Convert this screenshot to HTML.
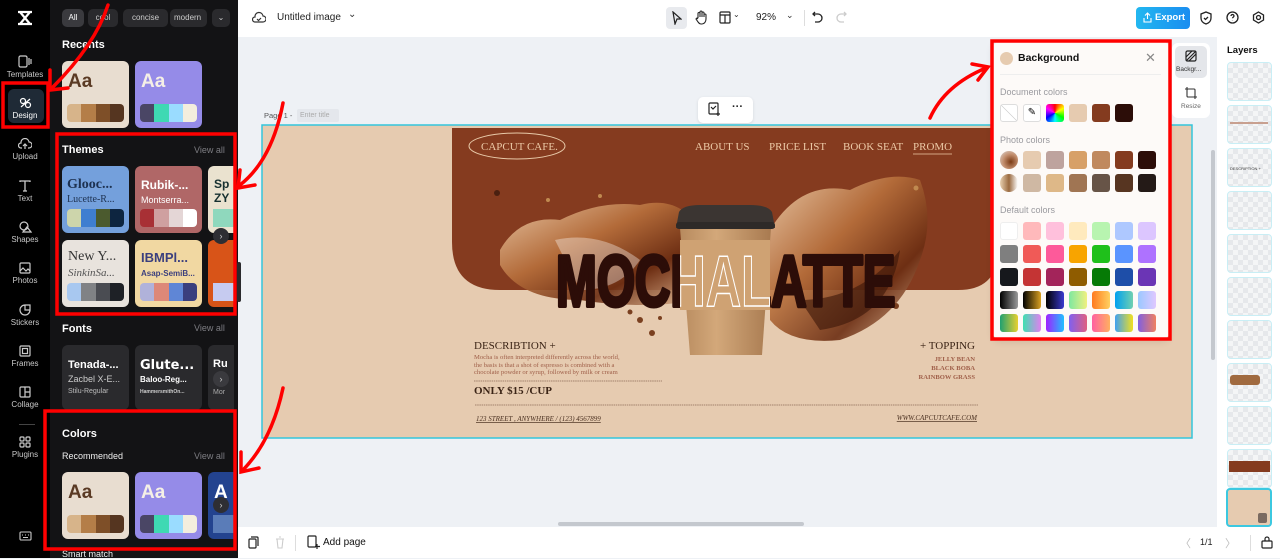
<!DOCTYPE html>
<html><head><meta charset="utf-8">
<style>
*{box-sizing:border-box;margin:0;padding:0}
body{width:1280px;height:558px;overflow:hidden;position:relative;font-family:"Liberation Sans",sans-serif;background:#eef1f5}
.a{position:absolute}
.rail{left:0;top:0;width:50px;height:558px;background:#000}
.ri{position:absolute;left:0;width:50px;text-align:center;color:#c9c9c9;font-size:8px}
.ri svg{display:block;margin:0 auto 2px}
.panel{left:50px;top:0;width:188px;height:558px;background:#131315;color:#fff}
.chip{position:absolute;top:9px;height:18px;border-radius:5px;background:#2a2a2d;color:#ccc;font-size:8px;line-height:18px;text-align:center}
.h{position:absolute;font-size:11px;font-weight:bold;color:#fff}
.va{position:absolute;font-size:9px;color:#7d7d82}
.card{position:absolute;width:67px;height:67px;border-radius:6px;overflow:hidden}
.pal{position:absolute;left:5px;right:5px;bottom:6px;height:18px;border-radius:4px;overflow:hidden;display:flex}
.pal i{flex:1}
.aa{position:absolute;left:6px;top:10px;font-size:19px;font-weight:bold}
.top{left:238px;top:0;width:1042px;height:37px;background:#fff}
.bot{left:238px;top:527px;width:1042px;height:31px;background:#fff}
.sw{position:absolute;width:18px;height:18px;border-radius:3px}
.lay{position:absolute;left:1227px;width:45px;height:39px;border-radius:4px;border:1.5px solid #c9eef5;background:
 repeating-conic-gradient(#e6e8eb 0 25%,#f4f5f6 0 50%) 0 0/10px 10px}
</style></head><body>

<div class="a rail">
 <div class="ri" style="top:9px;color:#fff"><svg width="18" height="18" viewBox="0 0 18 18" fill="none" stroke="#fff" stroke-width="2.2"><path d="M2 3h14M2 15h14M4 3l10 12M14 3L4 15"/></svg></div>
 <div class="ri" style="top:55px"><svg width="14" height="13" viewBox="0 0 14 13" fill="none" stroke="#ccc" stroke-width="1.2"><rect x="1" y="1" width="8" height="11" rx="1.5"/><path d="M11 3v7M13 4v5"/></svg>Templates</div>
 <div class="a" style="left:8px;top:89px;width:36px;height:34px;border-radius:6px;background:#1f2a36"></div>
 <div class="ri" style="top:97px;color:#fff"><svg width="13" height="12" viewBox="0 0 13 12" fill="none" stroke="#fff" stroke-width="1.2"><circle cx="4" cy="4" r="2.5"/><circle cx="9" cy="8" r="2.5"/><path d="M2 10l9-8"/></svg>Design</div>
 <div class="ri" style="top:138px"><svg width="14" height="12" viewBox="0 0 14 12" fill="none" stroke="#ccc" stroke-width="1.2"><path d="M4 10H3a2.5 2.5 0 010-5 4 4 0 018-1 3 3 0 01-0 6h-1M7 11V6M5 8l2-2 2 2"/></svg>Upload</div>
 <div class="ri" style="top:180px"><svg width="12" height="12" viewBox="0 0 12 12" fill="none" stroke="#ccc" stroke-width="1.3"><path d="M1 2V1h10v1M6 1v10M4 11h4"/></svg>Text</div>
 <div class="ri" style="top:221px"><svg width="13" height="12" viewBox="0 0 13 12" fill="none" stroke="#ccc" stroke-width="1.2"><circle cx="5" cy="5" r="4"/><path d="M8 6l4 5H4z"/></svg>Shapes</div>
 <div class="ri" style="top:262px"><svg width="12" height="12" viewBox="0 0 12 12" fill="none" stroke="#ccc" stroke-width="1.2"><rect x="1" y="1" width="10" height="10" rx="1"/><path d="M1 9l3-3 3 3 2-2 2 2"/></svg>Photos</div>
 <div class="ri" style="top:304px"><svg width="12" height="12" viewBox="0 0 12 12" fill="none" stroke="#ccc" stroke-width="1.2"><path d="M11 6a5 5 0 11-5-5h5v5zM11 6H6V1"/></svg>Stickers</div>
 <div class="ri" style="top:345px"><svg width="12" height="12" viewBox="0 0 12 12" fill="none" stroke="#ccc" stroke-width="1.2"><rect x="1" y="1" width="10" height="10" rx="1"/><rect x="3.5" y="3.5" width="5" height="5"/></svg>Frames</div>
 <div class="ri" style="top:386px"><svg width="12" height="12" viewBox="0 0 12 12" fill="none" stroke="#ccc" stroke-width="1.2"><rect x="1" y="1" width="10" height="10" rx="1"/><path d="M6 1v10M6 6h5"/></svg>Collage</div>
 <div class="a" style="left:19px;top:424px;width:16px;height:1px;background:#444"></div>
 <div class="ri" style="top:436px"><svg width="12" height="12" viewBox="0 0 12 12" fill="none" stroke="#ccc" stroke-width="1.2"><rect x="1" y="1" width="4" height="4" rx="1"/><rect x="7" y="1" width="4" height="4" rx="1"/><rect x="1" y="7" width="4" height="4" rx="1"/><rect x="7" y="7" width="4" height="4" rx="1"/></svg>Plugins</div>
 <div class="ri" style="top:531px"><svg width="13" height="10" viewBox="0 0 13 10" fill="none" stroke="#ccc" stroke-width="1.1"><rect x="1" y="1" width="11" height="8" rx="1"/><path d="M3 4h1M6 4h1M9 4h1M4 6.5h5"/></svg></div>
</div>

<div class="a panel">
 <div class="chip" style="left:12px;width:22px;background:#3a3a3e;color:#fff">All</div>
 <div class="chip" style="left:38px;width:30px">cool</div>
 <div class="chip" style="left:73px;width:45px">concise</div>
 <div class="chip" style="left:120px;width:37px;text-align:left;padding-left:4px;overflow:hidden">modern</div>
 <div class="chip" style="left:162px;width:18px">⌄</div>
 <div class="h" style="left:12px;top:39px">Recents</div>
 <div class="card" style="left:12px;top:61px;background:#e8ddd0"><div class="aa" style="color:#5a3a24">Aa</div><div class="pal"><i style="background:#d7b48a"></i><i style="background:#b47e48"></i><i style="background:#7e4f28"></i><i style="background:#553520"></i></div></div>
 <div class="card" style="left:85px;top:61px;background:#958be8"><div class="aa" style="color:#f5f0e6">Aa</div><div class="pal"><i style="background:#4a4665"></i><i style="background:#3fd9b3"></i><i style="background:#9adcff"></i><i style="background:#f3eedd"></i></div></div>
 <div class="h" style="left:12px;top:144px">Themes</div><div class="va" style="left:144px;top:145px">View all</div>
 <div class="card" style="left:12px;top:166px;background:#74a0dc"><div style="position:absolute;left:5px;top:11px;font:bold 14px 'Liberation Serif',serif;color:#1d3150">Glooc...</div><div style="position:absolute;left:5px;top:28px;font:10px 'Liberation Serif',serif;color:#1d3150">Lucette-R...</div><div class="pal"><i style="background:#cdd5ab"></i><i style="background:#3f7ed0"></i><i style="background:#4b5a2e"></i><i style="background:#0d2540"></i></div></div>
 <div class="card" style="left:85px;top:166px;background:#b06767"><div style="position:absolute;left:6px;top:12px;font:bold 12px 'Liberation Sans';color:#fff">Rubik-...</div><div style="position:absolute;left:6px;top:29px;font:9px 'Liberation Sans';color:#fff">Montserra...</div><div class="pal"><i style="background:#a83035"></i><i style="background:#cfa0a0"></i><i style="background:#e4d6d6"></i><i style="background:#fff"></i></div></div>
 <div class="card" style="left:158px;top:166px;width:26px;border-radius:6px 0 0 6px;background:#eae2cf"><div style="position:absolute;left:6px;top:11px;font:bold 12px sans-serif;color:#163030">Sp<br>ZY</div><div style="position:absolute;left:5px;bottom:6px;width:21px;height:18px;background:#8fd8bd"></div></div>
 <div class="card" style="left:12px;top:240px;background:#e8e3dd"><div style="position:absolute;left:6px;top:9px;font:14px 'Liberation Serif',serif;color:#333">New Y...</div><div style="position:absolute;left:6px;top:27px;font:italic 11px 'Liberation Serif',serif;color:#555">SinkinSa...</div><div class="pal"><i style="background:#a8c8f0"></i><i style="background:#808285"></i><i style="background:#4a4c52"></i><i style="background:#1e2126"></i></div></div>
 <div class="card" style="left:85px;top:240px;background:#f1d8a2"><div style="position:absolute;left:6px;top:10px;font:bold 13px 'Liberation Sans';color:#3b3f7e">IBMPl...</div><div style="position:absolute;left:6px;top:29px;font:bold 8px 'Liberation Sans';color:#3b3f7e">Asap-SemiB...</div><div class="pal"><i style="background:#b0b2da"></i><i style="background:#dd8878"></i><i style="background:#5f86d6"></i><i style="background:#3a3f7e"></i></div></div>
 <div class="card" style="left:158px;top:240px;width:26px;border-radius:6px 0 0 6px;background:#d85418"><div style="position:absolute;left:5px;bottom:6px;width:21px;height:18px;background:#c6cbf0"></div></div>
 <div class="a" style="left:163px;top:228px;width:16px;height:16px;border-radius:50%;background:#2e2e33;color:#ccc;font-size:9px;text-align:center;line-height:16px">›</div>
 <div class="h" style="left:12px;top:323px">Fonts</div><div class="va" style="left:144px;top:323px">View all</div>
 <div class="card" style="left:12px;top:345px;background:#2a2a2d;height:65px"><div style="position:absolute;left:6px;top:14px;font:bold 11px 'Liberation Sans';color:#fff">Tenada-...</div><div style="position:absolute;left:6px;top:29px;font:9px 'Liberation Sans';color:#ccc">Zacbel X-E...</div><div style="position:absolute;left:6px;top:43px;font:7px 'Liberation Sans';color:#bbb">Stilu-Regular</div></div>
 <div class="card" style="left:85px;top:345px;background:#2a2a2d;height:65px"><div style="position:absolute;left:5px;top:13px;font:bold 13px 'DejaVu Sans';color:#fff">Glute...</div><div style="position:absolute;left:5px;top:30px;font:bold 8px 'Liberation Sans';color:#fff">Baloo-Reg...</div><div style="position:absolute;left:5px;top:44px;font:bold 5px 'Liberation Sans';color:#ccc">HammersmithOn...</div></div>
 <div class="card" style="left:158px;top:345px;width:26px;height:65px;border-radius:6px 0 0 6px;background:#2a2a2d"><div style="position:absolute;left:5px;top:13px;font:bold 11px sans-serif;color:#fff">Ru</div><div style="position:absolute;left:5px;top:44px;font:7px sans-serif;color:#aaa">Mor</div></div>
 <div class="a" style="left:163px;top:371px;width:16px;height:16px;border-radius:50%;background:#3a3a3e;color:#ccc;font-size:9px;text-align:center;line-height:16px">›</div>
 <div class="h" style="left:12px;top:428px">Colors</div>
 <div class="a" style="left:12px;top:451px;font-size:9px;color:#eee">Recommended</div><div class="va" style="left:144px;top:451px">View all</div>
 <div class="card" style="left:12px;top:472px;background:#e8ddd0"><div class="aa" style="color:#5a3a24">Aa</div><div class="pal"><i style="background:#d7b48a"></i><i style="background:#b47e48"></i><i style="background:#7e4f28"></i><i style="background:#553520"></i></div></div>
 <div class="card" style="left:85px;top:472px;background:#958be8"><div class="aa" style="color:#f5f0e6">Aa</div><div class="pal"><i style="background:#4a4665"></i><i style="background:#3fd9b3"></i><i style="background:#9adcff"></i><i style="background:#f3eedd"></i></div></div>
 <div class="card" style="left:158px;top:472px;width:26px;border-radius:6px 0 0 6px;background:#23438f"><div class="aa" style="color:#fff">A</div><div style="position:absolute;left:5px;bottom:6px;width:21px;height:18px;background:#5a7cb8"></div></div>
 <div class="a" style="left:163px;top:497px;width:16px;height:16px;border-radius:50%;background:#2e2e33;color:#ccc;font-size:9px;text-align:center;line-height:16px">›</div>
 <div class="a" style="left:12px;top:549px;font-size:9px;color:#eee">Smart match</div>
</div>
<div class="a" style="left:237px;top:262px;width:4px;height:40px;background:#2a2a2d;border-radius:2px"></div>

<div class="a top">
 <svg class="a" style="left:14px;top:11px" width="14" height="14" viewBox="0 0 14 14" fill="none" stroke="#333" stroke-width="1.2"><path d="M4 11H3a2.5 2.5 0 010-5 4 4 0 018-1 3 3 0 010 6H4z"/><path d="M5 8l1.5 1.5L9 7"/></svg>
 <div class="a" style="left:39px;top:12px;font-size:10px;color:#222">Untitled image</div>
 <div class="a" style="left:110px;top:9px;font-size:10px;color:#333">⌄</div>
 <div class="a" style="left:428px;top:7px;width:21px;height:22px;border-radius:4px;background:#e8eaee"></div>
 <svg class="a" style="left:433px;top:11px" width="11" height="14" viewBox="0 0 11 14" fill="none" stroke="#222" stroke-width="1.2"><path d="M2 1l8 7H6l-2 5z"/></svg>
 <svg class="a" style="left:457px;top:10px" width="12" height="15" viewBox="0 0 12 15" fill="none" stroke="#222" stroke-width="1.1"><path d="M3 8V3.5a1 1 0 012 0V7M5 6V2a1 1 0 012 0v5M7 6.5V3a1 1 0 012 0v4M9 7V5a1 1 0 012 0v4c0 3-2 5-4 5H6c-2 0-3-2-5-5l1-1 1 1"/></svg>
 <svg class="a" style="left:481px;top:11px" width="12" height="13" viewBox="0 0 12 13" fill="none" stroke="#222" stroke-width="1.2"><rect x="1" y="1" width="10" height="11" rx="1"/><path d="M1 4h10M6 4v8"/></svg>
 <div class="a" style="left:495px;top:10px;font-size:8px;color:#333">⌄</div>
 <div class="a" style="left:518px;top:12px;font-size:10px;color:#222">92%</div>
 <div class="a" style="left:548px;top:10px;font-size:9px;color:#333">⌄</div>
 <div class="a" style="left:566px;top:10px;width:1px;height:16px;background:#ddd"></div>
 <svg class="a" style="left:574px;top:11px" width="11" height="13" viewBox="0 0 11 13" fill="none" stroke="#222" stroke-width="1.3"><path d="M3 1L1 3l2 2M1 3h5a4 4 0 010 8H3"/></svg>
 <svg class="a" style="left:598px;top:11px" width="11" height="13" viewBox="0 0 11 13" fill="none" stroke="#ccc" stroke-width="1.3"><path d="M8 1l2 2-2 2M10 3H5a4 4 0 000 8h3"/></svg>
 <div class="a" style="left:898px;top:7px;width:54px;height:22px;border-radius:4px;background:linear-gradient(90deg,#22b7f0,#1a8df0);color:#fff;font-size:9.5px;font-weight:bold;line-height:22px;padding-left:19px">Export</div>
 <svg class="a" style="left:905px;top:12px" width="9" height="11" viewBox="0 0 9 11" fill="none" stroke="#fff" stroke-width="1.1"><path d="M4.5 7V1M2 3.5L4.5 1 7 3.5M1 6v4h7V6"/></svg>
 <svg class="a" style="left:962px;top:11px" width="12" height="14" viewBox="0 0 12 14" fill="none" stroke="#222" stroke-width="1.3"><path d="M6 1l5 2v4c0 3-2 5-5 6-3-1-5-3-5-6V3z"/><path d="M4 7l1.5 1.5L8 6"/></svg>
 <svg class="a" style="left:988px;top:11px" width="13" height="13" viewBox="0 0 13 13" fill="none" stroke="#222" stroke-width="1.3"><circle cx="6.5" cy="6.5" r="5.5"/><path d="M5 5a1.5 1.5 0 113 0c0 1-1.5 1.2-1.5 2.3M6.5 9.5v.3"/></svg>
 <svg class="a" style="left:1014px;top:11px" width="13" height="13" viewBox="0 0 13 13" fill="none" stroke="#222" stroke-width="1.3"><path d="M6.5 1l5 3v5l-5 3-5-3V4z"/><circle cx="6.5" cy="6.5" r="2"/></svg>
</div>

<div class="a" style="left:264px;top:111px;font-size:7.5px;color:#555">Page 1 -</div>
<div class="a" style="left:297px;top:109px;width:42px;height:13px;background:#e4e7ec;border-radius:2px;font-size:7px;color:#aaa;padding:3px 0 0 3px">Enter title</div>
<div class="a" style="left:698px;top:97px;width:55px;height:26px;background:#fff;border-radius:5px;box-shadow:0 1px 3px rgba(0,0,0,.1)"></div>
<svg class="a" style="left:708px;top:102px" width="13" height="14" viewBox="0 0 13 14" fill="none" stroke="#222" stroke-width="1.2"><rect x="1" y="1" width="9" height="11" rx="1"/><path d="M3 5l2 2 3-3M10 10v4M8 12h4"/></svg>
<div class="a" style="left:732px;top:101px;font-size:11px;font-weight:bold;color:#222">···</div>

<svg class="a" style="left:261px;top:124px" width="932" height="316" viewBox="261 124 932 316">
 <rect x="262" y="125" width="930" height="313" fill="#e6cbb0" stroke="#33c6dc" stroke-width="1.5"/>
 <path d="M452 128H998V250Q998 290 958 290H500Q452 290 452 242Z" fill="#853b1f"/>
 <ellipse cx="517" cy="146" rx="48" ry="13" fill="none" stroke="#e8c9a8" stroke-width="1"/>
 <g font-family="Liberation Serif,serif" font-size="11" fill="#ecc9a6">
  <text x="481" y="150">CAPCUT CAFE.</text>
  <text x="695" y="150">ABOUT US</text><text x="769" y="150">PRICE LIST</text><text x="843" y="150">BOOK SEAT</text><text x="913" y="150">PROMO</text>
 </g>
 <line x1="913" y1="154" x2="952" y2="154" stroke="#ecc9a6" stroke-width=".8"/>
 <defs>
  <linearGradient id="sp" x1="0" y1="0" x2="1" y2="1"><stop offset="0" stop-color="#f0d2b0"/><stop offset=".4" stop-color="#b8703c"/><stop offset=".7" stop-color="#6b2d12"/><stop offset="1" stop-color="#e8c09a"/></linearGradient>
  <linearGradient id="cup" x1="0" x2="1"><stop offset="0" stop-color="#b78a5e"/><stop offset=".4" stop-color="#d3a87a"/><stop offset="1" stop-color="#a87a50"/></linearGradient>
  <clipPath id="cc"><rect x="680" y="240" width="90" height="70"/></clipPath>
 </defs>
 <path d="M500 250Q520 215 560 220Q600 200 640 205Q680 195 700 230L700 300Q640 310 580 300Q520 300 500 265Z" fill="url(#sp)" opacity=".9"/>
 <path d="M770 230Q800 180 850 190Q890 170 920 180Q935 220 920 260Q900 320 840 340Q790 345 770 320Z" fill="url(#sp)" opacity=".9"/>
 <path d="M555 240Q600 230 640 260Q620 290 580 290Z" fill="#fff" opacity=".35"/>
 <path d="M800 300Q860 300 900 250Q890 320 820 330Z" fill="#3a1508" opacity=".6"/>
 <circle cx="497" cy="193" r="3" fill="#4a2010"/><circle cx="640" cy="320" r="3" fill="#7a4020"/><circle cx="652" cy="333" r="3" fill="#7a4020"/><circle cx="896" cy="306" r="3" fill="#7a4020"/><circle cx="916" cy="188" r="2.5" fill="#c08a50"/>
 <circle cx="630" cy="312" r="2.5" fill="#7a4020"/><circle cx="660" cy="318" r="2" fill="#7a4020"/><circle cx="548" cy="200" r="2" fill="#c08a50"/><circle cx="600" cy="196" r="2" fill="#c08a50"/>
 <path d="M680 228H771L762 355H690Z" fill="url(#cup)"/>
 <path d="M679 212Q683 205 700 205H750Q768 205 772 212L775 228H676Z" fill="#3b3532"/>
 <rect x="676" y="222" width="99" height="7" rx="3" fill="#2e2a28"/>
 <g font-family="Liberation Sans,sans-serif" font-weight="bold" font-size="72" transform="translate(556 306) scale(.69 1)">
  <text x="0" y="0" fill="#2c0d08" stroke="#2c0d08" stroke-width="4" stroke-linejoin="round" textLength="492" lengthAdjust="spacingAndGlyphs">MOCHALATTE</text>
 </g>
 <g clip-path="url(#cc)">
  <rect x="680" y="240" width="90" height="70" fill="#cfa273"/>
  <g font-family="Liberation Sans,sans-serif" font-weight="bold" font-size="72" transform="translate(556 306) scale(.69 1)">
   <text x="0" y="0" fill="none" stroke="#fff" stroke-width="1.4" textLength="492" lengthAdjust="spacingAndGlyphs">MOCHALATTE</text>
  </g>
 </g>
 <g font-family="Liberation Serif,serif" fill="#3b2416">
  <text x="474" y="349" font-size="11">DESCRIBTION +</text>
  <text x="474" y="394" font-size="11" font-weight="bold">ONLY $15 /CUP</text>
  <text x="975" y="349" font-size="11" text-anchor="end">+ TOPPING</text>
 </g>
 <g font-family="Liberation Serif,serif" font-size="6.6" fill="#a0604a">
  <text x="474" y="359">Mocha is often interpreted differently across the world,</text>
  <text x="474" y="367">the basis is that a shot of espresso is combined with a</text>
  <text x="474" y="374">chocolate powder or syrup, followed by milk or cream</text>
  <text x="975" y="361" text-anchor="end" font-weight="bold">JELLY BEAN</text>
  <text x="975" y="370" text-anchor="end" font-weight="bold">BLACK BOBA</text>
  <text x="975" y="379" text-anchor="end" font-weight="bold">RAINBOW GRASS</text>
 </g>
 <line x1="474" y1="381" x2="662" y2="381" stroke="#8a6a55" stroke-width=".8" stroke-dasharray="1.5 .7"/>
 <line x1="475" y1="405" x2="978" y2="405" stroke="#8a6a55" stroke-width=".8" stroke-dasharray="1.5 .7"/>
 <g font-family="Liberation Serif,serif" font-size="7" font-style="italic" fill="#4a3020" text-decoration="underline">
  <text x="476" y="421">123 STREET , ANYWHERE / (123) 4567899</text>
  <text x="977" y="420" text-anchor="end">WWW.CAPCUTCAFE.COM</text>
 </g>
</svg>

<div class="a" style="left:993px;top:42px;width:176px;height:297px;background:#fdfaf8;border-radius:6px;box-shadow:0 2px 8px rgba(0,0,0,.12)"></div>
<div class="a" style="left:1000px;top:52px;width:13px;height:13px;border-radius:50%;background:#e6cbb0"></div>
<div class="a" style="left:1018px;top:52px;font-size:10.5px;font-weight:bold;color:#111">Background</div>
<div class="a" style="left:1145px;top:50px;font-size:13px;color:#888">✕</div>
<div class="a" style="left:1000px;top:74px;width:161px;height:1px;background:#eee"></div>
<div class="a" style="left:1000px;top:87px;font-size:9px;color:#9a9a9f">Document colors</div>
<div class="a" style="left:1000px;top:135px;font-size:9px;color:#9a9a9f">Photo colors</div>
<div class="a" style="left:1000px;top:205px;font-size:9px;color:#9a9a9f">Default colors</div>
<div class="sw" style="left:1000px;top:104px;border:1px solid #ddd;background:linear-gradient(45deg,transparent 48%,#ccc 49%,#ccc 51%,transparent 52%),#fff"></div>
<div class="sw" style="left:1023px;top:104px;border:1px solid #ddd;background:#fff;text-align:center;font-size:10px;line-height:16px">✎</div>
<div class="sw" style="left:1046px;top:104px;background:conic-gradient(red,#ff0,#0f0,#0ff,#00f,#f0f,red)"></div>
<div class="sw" style="left:1069px;top:104px;background:#e6cbb0"></div>
<div class="sw" style="left:1092px;top:104px;background:#843b1f"></div>
<div class="sw" style="left:1115px;top:104px;background:#2c0d08"></div>
<div class="sw" style="left:1000px;top:151px;border-radius:50%;background:radial-gradient(circle at 60% 60%,#7a3a14,#c49070 50%,#ddd)"></div>
<div class="sw" style="left:1000px;top:174px;border-radius:50%;background:linear-gradient(90deg,#e8d0b0,#9a6a40,#fff)"></div>
<div class="sw" style="left:1023px;top:151px;background:#e6cbb0"></div><div class="sw" style="left:1046px;top:151px;background:#bea39e"></div><div class="sw" style="left:1069px;top:151px;background:#d7a067"></div><div class="sw" style="left:1092px;top:151px;background:#c0895e"></div><div class="sw" style="left:1115px;top:151px;background:#843b1f"></div><div class="sw" style="left:1138px;top:151px;background:#2c0d08"></div>
<div class="sw" style="left:1023px;top:174px;background:#cfb8a3"></div><div class="sw" style="left:1046px;top:174px;background:#deb888"></div><div class="sw" style="left:1069px;top:174px;background:#a07553"></div><div class="sw" style="left:1092px;top:174px;background:#675447"></div><div class="sw" style="left:1115px;top:174px;background:#573521"></div><div class="sw" style="left:1138px;top:174px;background:#241a17"></div>
<div class="sw" style="left:1000px;top:222px;background:#fff;border:1px solid #eee"></div><div class="sw" style="left:1023px;top:222px;background:#ffb9bb"></div><div class="sw" style="left:1046px;top:222px;background:#ffc0dc"></div><div class="sw" style="left:1069px;top:222px;background:#ffeabe"></div><div class="sw" style="left:1092px;top:222px;background:#b8f4b0"></div><div class="sw" style="left:1115px;top:222px;background:#aec8ff"></div><div class="sw" style="left:1138px;top:222px;background:#dcc6ff"></div>
<div class="sw" style="left:1000px;top:245px;background:#7f7f7f"></div><div class="sw" style="left:1023px;top:245px;background:#f05a57"></div><div class="sw" style="left:1046px;top:245px;background:#fd5a9a"></div><div class="sw" style="left:1069px;top:245px;background:#f8a400"></div><div class="sw" style="left:1092px;top:245px;background:#1fc01b"></div><div class="sw" style="left:1115px;top:245px;background:#5a94ff"></div><div class="sw" style="left:1138px;top:245px;background:#ae72ff"></div>
<div class="sw" style="left:1000px;top:268px;background:#16181c"></div><div class="sw" style="left:1023px;top:268px;background:#c43434"></div><div class="sw" style="left:1046px;top:268px;background:#a3245a"></div><div class="sw" style="left:1069px;top:268px;background:#8f5c00"></div><div class="sw" style="left:1092px;top:268px;background:#067a06"></div><div class="sw" style="left:1115px;top:268px;background:#1e4ea8"></div><div class="sw" style="left:1138px;top:268px;background:#6b35b5"></div>
<div class="sw" style="left:1000px;top:291px;background:linear-gradient(90deg,#000,#999)"></div><div class="sw" style="left:1023px;top:291px;background:linear-gradient(90deg,#000,#d9a020)"></div><div class="sw" style="left:1046px;top:291px;background:linear-gradient(90deg,#000,#3a3ad0)"></div><div class="sw" style="left:1069px;top:291px;background:linear-gradient(90deg,#7ee8a0,#f0f080)"></div><div class="sw" style="left:1092px;top:291px;background:linear-gradient(90deg,#ff7a20,#ffd060)"></div><div class="sw" style="left:1115px;top:291px;background:linear-gradient(90deg,#00a0f0,#70d0b0)"></div><div class="sw" style="left:1138px;top:291px;background:linear-gradient(90deg,#9ac8ff,#e0c8ff)"></div>
<div class="sw" style="left:1000px;top:314px;background:linear-gradient(90deg,#20a070,#e8d030)"></div><div class="sw" style="left:1023px;top:314px;background:linear-gradient(90deg,#40e0b0,#e080f0)"></div><div class="sw" style="left:1046px;top:314px;background:linear-gradient(90deg,#a020ff,#20c0ff)"></div><div class="sw" style="left:1069px;top:314px;background:linear-gradient(90deg,#8060f0,#e06080)"></div><div class="sw" style="left:1092px;top:314px;background:linear-gradient(90deg,#ff60a0,#ffb060)"></div><div class="sw" style="left:1115px;top:314px;background:linear-gradient(90deg,#40a0f0,#f0e020)"></div><div class="sw" style="left:1138px;top:314px;background:linear-gradient(90deg,#8060e0,#f08060)"></div>

<div class="a" style="left:1172px;top:43px;width:38px;height:75px;background:#fff;border-radius:6px"></div>
<div class="a" style="left:1175px;top:46px;width:32px;height:32px;background:#e4e6ea;border-radius:5px"></div>
<svg class="a" style="left:1185px;top:50px" width="12" height="12" viewBox="0 0 12 12" fill="none" stroke="#222" stroke-width="1.2"><rect x="1" y="1" width="10" height="10" rx="1.5"/><path d="M1 7l6-6M4 11l7-7M1 11L11 1"/></svg>
<div class="a" style="left:1176px;top:66px;font-size:6.5px;color:#333">Backgr...</div>
<svg class="a" style="left:1185px;top:87px" width="12" height="12" viewBox="0 0 12 12" fill="none" stroke="#333" stroke-width="1.1"><rect x="2" y="2" width="8" height="8" rx="1"/><path d="M2 0v2M10 10v2M0 2h2M10 10h2"/></svg>
<div class="a" style="left:1181px;top:103px;font-size:6.5px;color:#666">Resize</div>
<div class="a" style="left:1211px;top:150px;width:4px;height:210px;background:#c4c8ce;border-radius:2px"></div>
<div class="a" style="left:1217px;top:37px;width:63px;height:490px;background:#fff"></div>
<div class="a" style="left:1227px;top:45px;font-size:9.5px;font-weight:bold;color:#111">Layers</div>
<div class="lay" style="top:62px"></div><div class="lay" style="top:105px"></div><div class="lay" style="top:148px"></div><div class="lay" style="top:191px"></div><div class="lay" style="top:234px"></div><div class="lay" style="top:277px"></div><div class="lay" style="top:320px"></div><div class="lay" style="top:363px"></div><div class="lay" style="top:406px"></div><div class="lay" style="top:449px"></div>
<div class="a" style="left:1230px;top:122px;width:38px;height:2px;background:#c8a090"></div>
<div class="a" style="left:1230px;top:166px;font-size:4px;color:#333">DESCRIPTION +</div>
<div class="a" style="left:1230px;top:375px;width:30px;height:10px;background:#a06a40;border-radius:3px"></div>
<div class="a" style="left:1229px;top:461px;width:41px;height:11px;background:#843b1f"></div>
<div class="a" style="left:1226px;top:488px;width:46px;height:39px;border-radius:4px;border:2px solid #3cc8e0;background:#e6cbb0"></div>
<div class="a" style="left:1258px;top:513px;width:9px;height:10px;background:#7a6a60;border-radius:2px"></div>

<div class="a bot">
 <svg class="a" style="left:10px;top:9px" width="11" height="13" viewBox="0 0 11 13" fill="none" stroke="#222" stroke-width="1.2"><rect x="1" y="3" width="7" height="9" rx="1"/><path d="M3 1h6a1 1 0 011 1v8"/></svg>
 <svg class="a" style="left:37px;top:9px" width="10" height="13" viewBox="0 0 10 13" fill="none" stroke="#ccc" stroke-width="1.1"><path d="M1 3h8M4 1h2M2 3l1 9h4l1-9"/></svg>
 <div class="a" style="left:57px;top:8px;width:1px;height:16px;background:#ddd"></div>
 <svg class="a" style="left:69px;top:8px" width="13" height="14" viewBox="0 0 13 14" fill="none" stroke="#222" stroke-width="1.2"><rect x="1" y="1" width="8" height="11" rx="1"/><path d="M10 9v5M8 11.5h5"/></svg>
 <div class="a" style="left:85px;top:10px;font-size:10px;color:#111">Add page</div>
 <div class="a" style="left:942px;top:8px;font-size:11px;color:#bbb">〈</div>
 <div class="a" style="left:962px;top:10px;font-size:9px;color:#222">1/1</div>
 <div class="a" style="left:987px;top:8px;font-size:11px;color:#bbb">〉</div>
 <div class="a" style="left:1012px;top:8px;width:1px;height:16px;background:#ddd"></div>
 <svg class="a" style="left:1023px;top:8px" width="12" height="14" viewBox="0 0 12 14" fill="none" stroke="#222" stroke-width="1.2"><rect x="1" y="6" width="10" height="7" rx="1"/><path d="M4 6V4a2 2 0 014 0v2"/></svg>
</div>
<div class="a" style="left:558px;top:522px;width:246px;height:4px;background:#c4c8ce;border-radius:2px"></div>

<svg class="a" style="left:0;top:0" width="1280" height="558" viewBox="0 0 1280 558" fill="none" stroke="#f00" stroke-width="3.5" stroke-linecap="round">
 <rect x="3" y="83" width="45" height="44"/>
 <rect x="57" y="134" width="178" height="180"/>
 <rect x="45" y="411" width="190" height="138"/>
 <rect x="992" y="41" width="178" height="298"/>
 <path d="M108 5Q95 45 52 88"/><path d="M50 70L50 90 68 88"/>
 <path d="M283 103Q272 160 240 185"/><path d="M240 170L238 188 255 185"/>
 <path d="M283 388Q272 440 243 470"/><path d="M241 452L241 472 259 468"/>
 <path d="M930 118Q945 85 986 68"/><path d="M972 64L988 67 978 80"/>
</svg>
</body></html>
